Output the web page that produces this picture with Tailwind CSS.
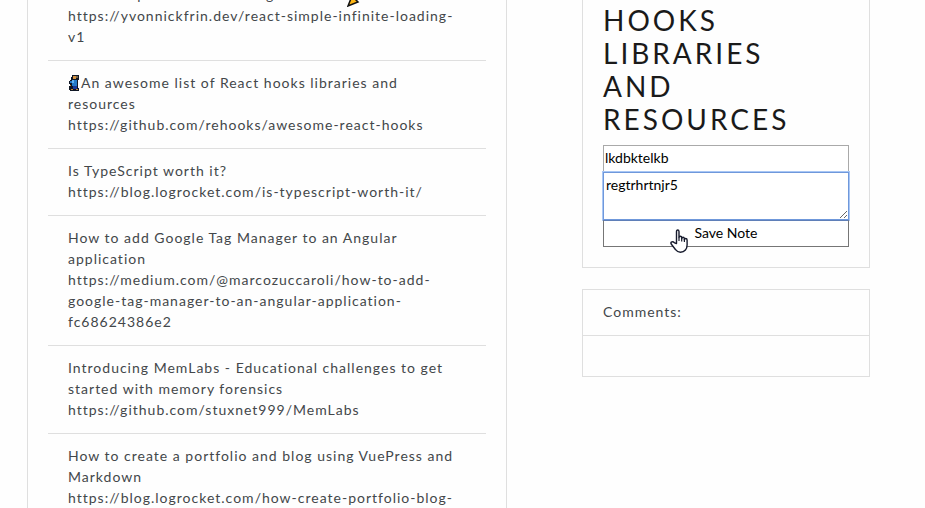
<!DOCTYPE html>
<html lang="en">
<head>
<meta charset="utf-8">
<meta name="viewport" content="width=device-width, initial-scale=1">
<title>Articles and notes</title>
<script src="https://cdn.jsdelivr.net/npm/@tailwindcss/browser@4"></script>
</head>
<body class="h-screen overflow-hidden bg-[#fefefe] font-['Lato',sans-serif] text-[14px] leading-[21px] text-[#43474a]">
<main class="grid grid-cols-[480fr_288fr] gap-x-[75px] pl-[27px] pr-[55px]">
  <section class="-mt-12 border border-[#dfdfdf] px-5 pt-5 tracking-[1px]">
    <ul>
      <li class="border-b border-[#dfdfdf] px-5 pt-[11px] pb-[13px]">React Simple Infinite Loading released
        <svg class="-my-1 ml-1 inline-block h-4 w-4 align-[-3px]" viewBox="0 0 16 16" aria-hidden="true"><path d="M1 15 5 5l6 6z" fill="#fdb515" stroke="#111" stroke-width="1.5"/><path d="m9 4 2-3m1 6 3-1M8 7l4-4" stroke="#d33" fill="none"/></svg><br>
        <a href="#">https://yvonnickfrin.dev/react-simple-infinite-loading-<br>v1</a></li>
      <li class="border-b border-[#dfdfdf] px-5 pt-[11px] pb-[13px]"><svg class="-my-1 inline-block h-4 w-[13px] align-[1px]" viewBox="0 0 13 16" shape-rendering="crispEdges" aria-hidden="true">
          <path d="M4 0h6l1 1v3l-1 1v7l1 2v2H2v-1H1v-4h1V9H1V6l2-2V2h1z" fill="#101826"/>
          <path d="M5 1h3v3H5z" fill="#d69442"/><path d="M8 1h2v2H8z" fill="#75664e"/>
          <path d="M4 5h5v6H4zM2 6h2v2H2z" fill="#257bc9"/><path d="M4 5h2v3H4z" fill="#65b3ee"/>
          <path d="M5 11h4v3H5z" fill="#1b3a99"/><path d="M2 10h1v1H2zm1 4h2v1H3zm5 0h2v1H8z" fill="#c98534"/>
        </svg>An awesome list of React hooks libraries and<br>resources<br>
        <a href="#">https://github.com/rehooks/awesome-react-hooks</a></li>
      <li class="border-b border-[#dfdfdf] px-5 pt-[11px] pb-[13px]">Is TypeScript worth it?<br><a href="#">https://blog.logrocket.com/is-typescript-worth-it/</a></li>
      <li class="border-b border-[#dfdfdf] px-5 pt-[11px] pb-[13px]">How to add Google Tag Manager to an Angular<br>application<br>
        <a href="#">https://medium.com/@marcozuccaroli/how-to-add-<br>google-tag-manager-to-an-angular-application-<br>fc68624386e2</a></li>
      <li class="border-b border-[#dfdfdf] px-5 pt-[11px] pb-[13px]">Introducing MemLabs - Educational challenges to get<br>started with memory forensics<br><a href="#">https://github.com/stuxnet999/MemLabs</a></li>
      <li class="px-5 pt-[11px] pb-[13px]">How to create a portfolio and blog using VuePress and<br>Markdown<br><a href="#">https://blog.logrocket.com/how-create-portfolio-blog-</a></li>
    </ul>
  </section>
  <aside>
    <section class="-mt-5 border border-[#dfdfdf] p-5">
      <h2 class="mb-[9px] pt-[3px] text-[28px] leading-[33px] tracking-[3px] text-[#1a1a1a] uppercase">Hooks<br>libraries<br>and<br>resources</h2>
      <form class="relative flex flex-col text-black">
        <input type="text" aria-label="Note title" value="lkdbktelkb" class="h-[27px] border border-[#a9a9a9] bg-white px-px pb-[2px]">
        <textarea aria-label="Note text" class="h-12 resize border border-[#6f98db] bg-white px-[2px] py-px outline outline-[#a9c7f5]">regtrhrtnjr5</textarea>
        <button type="button" class="h-[27px] border border-[#767676] border-t-[#5f7fb8] bg-white pb-[2px]">Save Note</button>
        <svg class="pointer-events-none absolute top-[84px] left-[67px] h-6 w-[19px]" viewBox="0 0 19 24" aria-hidden="true"><path d="M6.5 14.5V2.5q0-1.5 1.2-1.5T9 2.5v6q0-1.3 1.3-1.3t1.4 1.5v1q0-1.5 1.3-1.5t1.4 1.5v1.2q0-1.4 1.2-1.4 1.5 0 1.5 1.6V16q0 3-1.7 5-1.8 2.2-5 2.2-3 0-4.8-2.5L1.2 15q-.7-1.5.3-2 1.4-.8 3 .8z" fill="#fff" stroke="#171b2d" stroke-width="1.4" stroke-linejoin="round"/><path d="M9 8.5V12m2.7-3v3.5M14.4 10v3" fill="none" stroke="#171b2d" stroke-width="1.2"/></svg>
      </form>
    </section>
    <section class="mt-[21px] border border-[#dfdfdf]">
      <h3 class="border-b border-[#dfdfdf] px-5 pt-[11px] pb-[13px] tracking-[1px]">Comments:</h3>
      <div class="p-5"></div>
    </section>
  </aside>
</main>
</body>
</html>
